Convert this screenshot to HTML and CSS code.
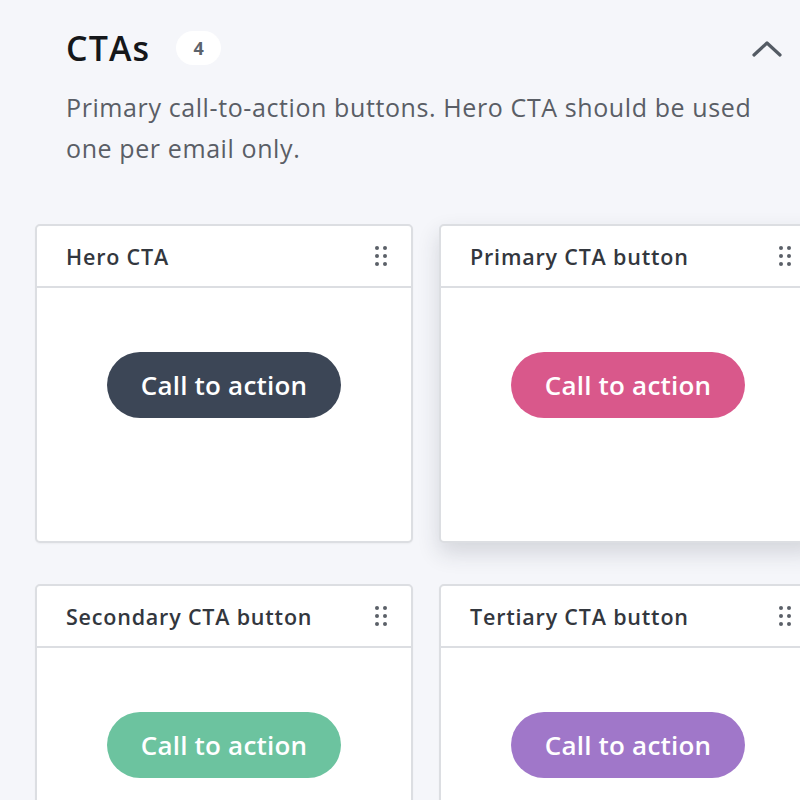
FILE: index.html
```html
<!DOCTYPE html>
<html>
<head>
<meta charset="utf-8">
<link rel="stylesheet" href="styles.css">
</head>
<body>
<section class="section">
  <div class="section-head">
    <div class="title-row">
      <h2 class="title">CTAs</h2>
      <span class="count">4</span>
    </div>
    <svg class="chevron" width="32" height="20" viewBox="0 0 32 20"><path d="M3 16 L16 4 L29 16" fill="none" stroke="#545b64" stroke-width="3.2" stroke-linecap="round" stroke-linejoin="round"/></svg>
  </div>
  <p class="desc">Primary call-to-action buttons. Hero CTA should be used one per email only.</p>
  <div class="grid">
    <div class="card">
      <div class="card-head"><span class="card-title">Hero CTA</span><span class="dots"><i></i><i></i><i></i><i></i><i></i><i></i></span></div>
      <div class="card-body"><span class="btn btn-hero">Call to action</span></div>
    </div>
    <div class="card card-raised">
      <div class="card-head"><span class="card-title">Primary CTA button</span><span class="dots"><i></i><i></i><i></i><i></i><i></i><i></i></span></div>
      <div class="card-body"><span class="btn btn-primary">Call to action</span></div>
    </div>
    <div class="card">
      <div class="card-head"><span class="card-title">Secondary CTA button</span><span class="dots"><i></i><i></i><i></i><i></i><i></i><i></i></span></div>
      <div class="card-body"><span class="btn btn-secondary">Call to action</span></div>
    </div>
    <div class="card">
      <div class="card-head"><span class="card-title">Tertiary CTA button</span><span class="dots"><i></i><i></i><i></i><i></i><i></i><i></i></span></div>
      <div class="card-body"><span class="btn btn-tertiary">Call to action</span></div>
    </div>
  </div>
</section>
</body>
</html>
```
FILE: styles.css
```css
html, body {
  margin: 0;
  padding: 0;
  background: #f5f6fa;
  overflow: hidden;
}
body {
  font-family: "Open Sans", Lato, sans-serif;
  width: 800px;
  height: 800px;
}
.section {
  padding: 27px 0 0 35px;
}
.section-head {
  display: flex;
  align-items: center;
  justify-content: space-between;
  padding-left: 31px;
  padding-right: 17px;
  height: 42px;
}
.title-row {
  display: flex;
  align-items: center;
  gap: 26px;
}
.title {
  margin: 0;
  font-size: 34px;
  font-weight: 600;
  color: #15171a;
  letter-spacing: 1.1px;
  line-height: 42px;
}
.count {
  display: inline-flex;
  align-items: center;
  justify-content: center;
  width: 45px;
  height: 34px;
  border-radius: 17px;
  background: #ffffff;
  color: #5c636c;
  font-size: 18px;
  font-weight: 700;
}
.chevron {
  display: block;
  margin-top: 2px;
}
.desc {
  margin: 18px 0 0 31px;
  width: 700px;
  font-size: 25px;
  line-height: 41px;
  letter-spacing: 0.6px;
  color: #5a5e66;
}
.grid {
  display: grid;
  grid-template-columns: 378px 378px;
  column-gap: 26px;
  row-gap: 41px;
  margin-top: 55px;
}
.card {
  background: #fff;
  border: 2px solid #dcdee2;
  border-radius: 5px;
  height: 319px;
  box-sizing: border-box;
  box-shadow: 0 1px 2px rgba(0,0,0,0.04);
}
.card-raised {
  box-shadow: 0 10px 22px rgba(40,45,60,0.16);
}
.card-head {
  height: 60px;
  border-bottom: 2px solid #dcdee2;
  display: flex;
  align-items: center;
  justify-content: space-between;
  padding: 0 24px 0 29px;
}
.card-title {
  font-size: 21.5px;
  font-weight: 600;
  letter-spacing: 0.8px;
  color: #33373e;
}
.dots {
  display: grid;
  grid-template-columns: 4px 4px;
  column-gap: 4px;
  row-gap: 4px;
}
.dots i {
  display: block;
  width: 4px;
  height: 4px;
  border-radius: 50%;
  background: #5b6068;
}
.card-body {
  display: flex;
  justify-content: center;
  padding-top: 64px;
}
.btn {
  display: inline-flex;
  align-items: center;
  justify-content: center;
  width: 234px;
  height: 66px;
  border-radius: 33px;
  color: #fff;
  font-size: 26px;
  font-weight: 600;
  letter-spacing: 0.2px;
}
.btn-hero { background: #3c4656; }
.btn-primary { background: #d9588b; }
.btn-secondary { background: #6cc39f; }
.btn-tertiary { background: #a077c9; }
```
